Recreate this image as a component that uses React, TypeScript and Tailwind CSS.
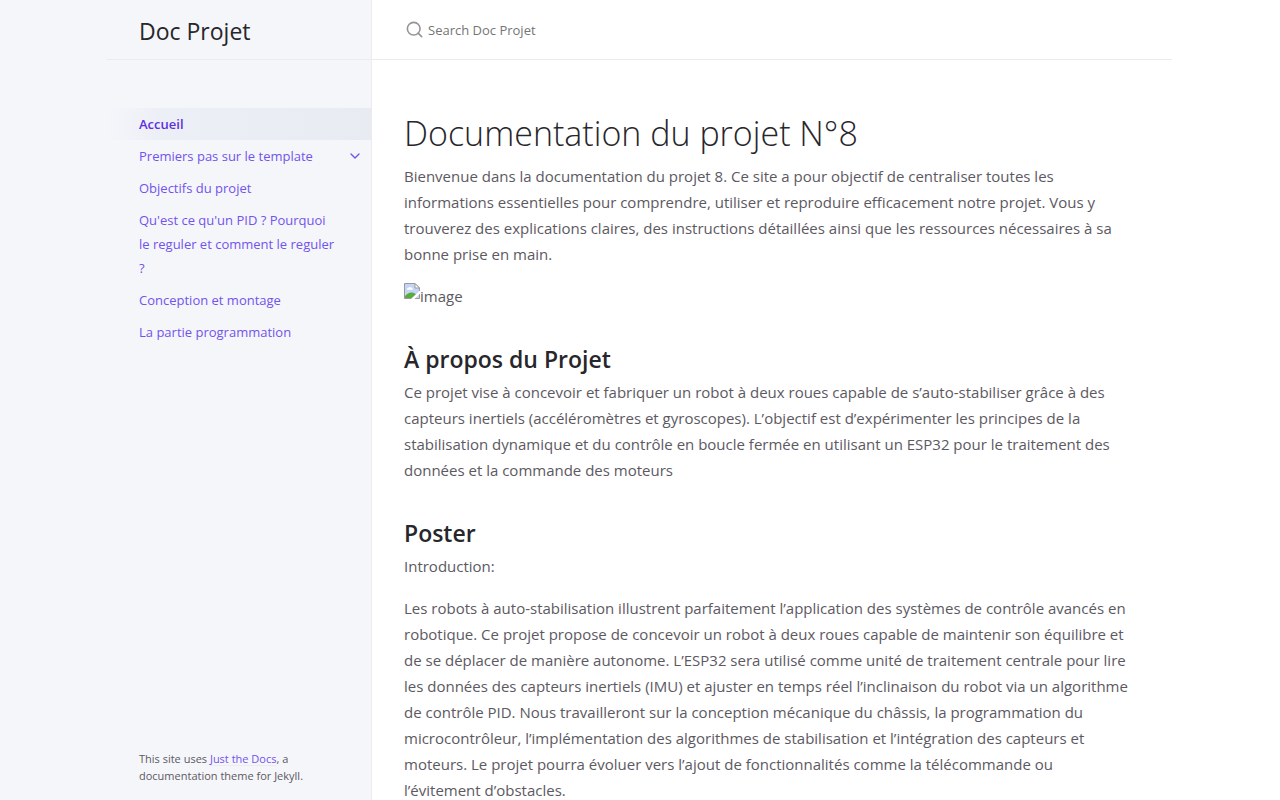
const navItems = [
  { label: 'Accueil', active: true },
  { label: 'Premiers pas sur le template', expandable: true },
  { label: 'Objectifs du projet' },
  { label: "Qu'est ce qu'un PID ? Pourquoi le reguler et comment le reguler ?" },
  { label: 'Conception et montage' },
  { label: 'La partie programmation' },
]

function Sidebar() {
  return (
    <aside className="sticky top-0 flex h-screen w-[calc(50%-268px)] min-w-[264px] shrink-0 flex-col items-end border-r border-[#eeebee] bg-[#f5f6fa]">
      <div className="flex h-[60px] w-full max-w-[264px] shrink-0 items-center border-b border-[#eeebee] px-8">
        <a href="#" className="pt-0.5 text-[23px] leading-8 text-[#27262b]">
          Doc Projet
        </a>
      </div>
      <nav aria-label="Main" className="w-full max-w-[264px] flex-1 overflow-y-auto pt-12">
        <ul>
          {navItems.map((item) => (
            <li key={item.label} className="flex">
              <a
                href="#"
                className={
                  item.active
                    ? 'flex-1 bg-linear-to-r from-[#ebedf5]/0 via-[#ebedf5]/80 via-20% to-[#e9ebf3] px-8 py-1 text-[13px] leading-6 font-semibold text-[#5c2fe0]'
                    : 'flex-1 px-8 py-1 text-[13px] leading-6 text-[#7253ed]'
                }
              >
                {item.label}
              </a>
              {item.expandable && (
                <button
                  type="button"
                  aria-label="Toggle Premiers pas sur le template"
                  className="-ml-8 flex w-8 items-center justify-center text-[#7253ed]"
                >
                  <svg
                    viewBox="0 0 24 24"
                    className="size-4 rotate-90"
                    fill="none"
                    stroke="currentColor"
                    strokeWidth="2"
                    strokeLinecap="round"
                    strokeLinejoin="round"
                  >
                    <path d="M9 18l6-6-6-6" />
                  </svg>
                </button>
              )}
            </li>
          ))}
        </ul>
      </nav>
      <footer className="w-full max-w-[264px] px-8 py-4 text-[11px] leading-[17px] text-[#5c5962]">
        This site uses{' '}
        <a href="#" className="text-[#7253ed] underline decoration-[#eeebee] underline-offset-2">
          Just the Docs
        </a>
        , a documentation theme for Jekyll.
      </footer>
    </aside>
  )
}

function SearchBar() {
  return (
    <div className="flex h-[60px] items-center border-b border-[#eeebee] pl-8">
      <label htmlFor="search" className="flex w-5 justify-center text-[#959396]">
        <svg
          viewBox="0 0 24 24"
          className="size-[19px]"
          fill="none"
          stroke="currentColor"
          strokeWidth="2"
          strokeLinecap="round"
          strokeLinejoin="round"
        >
          <circle cx="11" cy="11" r="8" />
          <path d="M21 21l-4.35-4.35" />
        </svg>
      </label>
      <input
        id="search"
        type="text"
        placeholder="Search Doc Projet"
        aria-label="Search Doc Projet"
        className="h-full flex-1 px-1 text-[13px] text-[#5c5962] outline-none placeholder:text-[#757575]"
      />
    </div>
  )
}

function MissingImage() {
  return (
    <span role="img" aria-label="image" className="flex items-start">
      <svg viewBox="0 0 16 16" className="size-4">
        <path d="M0.5 0.5H11L15.5 5V15.5H0.5Z" fill="#c3d5f8" stroke="#9a9a9a" />
        <path d="M11 0.5V5H15.5Z" fill="#fff" stroke="#9a9a9a" />
        <path d="M3 6.5a1.5 1.5 0 0 1 1.5-1.7A2 2 0 0 1 8 5.2a1 1 0 0 1 .5 1.6H3Z" fill="#fff" />
        <path d="M1 15v-2c2-2 4-3.500 6.500-3.500 2 0 3 .5 4.500 2l-4 3.500Z" fill="#5aac3c" />
        <path d="M7 16L16 7.500v3L10.500 16Z" fill="#fff" />
      </svg>
      <span>image</span>
    </span>
  )
}

export default function App() {
  return (
    <div className="flex items-start bg-white font-['Open_Sans','Noto_Sans',sans-serif]">
      <Sidebar />
      <div className="max-w-[800px] min-w-0 flex-1">
        <SearchBar />
        <main className="pt-12 pr-10 pl-8 text-[15px] leading-[26px] text-[#5c5962]">
          <h1 className="pt-1 text-[34px] leading-[43px] font-light text-[#27262b]">
            Documentation du projet N°8
          </h1>
          <p className="mt-2">
            Bienvenue dans la documentation du projet 8. Ce site a pour objectif de centraliser toutes les
            informations essentielles pour comprendre, utiliser et reproduire efficacement notre projet. Vous y
            trouverez des explications claires, des instructions détaillées ainsi que les ressources nécessaires à sa
            bonne prise en main.
          </p>
          <p className="mt-4">
            <MissingImage />
          </p>
          <h2 className="mt-[34px] text-[23px] leading-8 font-semibold text-[#27262b]">À propos du Projet</h2>
          <p className="mt-1">
            Ce projet vise à concevoir et fabriquer un robot à deux roues capable de s’auto-stabiliser grâce à des
            capteurs inertiels (accéléromètres et gyroscopes). L’objectif est d’expérimenter les principes de la
            stabilisation dynamique et du contrôle en boucle fermée en utilisant un ESP32 pour le traitement des
            données et la commande des moteurs
          </p>
          <h2 className="mt-[34px] text-[23px] leading-8 font-semibold text-[#27262b]">Poster</h2>
          <p className="mt-1">Introduction:</p>
          <p className="mt-4">
            Les robots à auto-stabilisation illustrent parfaitement l’application des systèmes de contrôle avancés en
            robotique. Ce projet propose de concevoir un robot à deux roues capable de maintenir son équilibre et
            de se déplacer de manière autonome. L’ESP32 sera utilisé comme unité de traitement centrale pour lire
            les données des capteurs inertiels (IMU) et ajuster en temps réel l’inclinaison du robot via un algorithme
            de contrôle PID. Nous travailleront sur la conception mécanique du châssis, la programmation du
            microcontrôleur, l’implémentation des algorithmes de stabilisation et l’intégration des capteurs et
            moteurs. Le projet pourra évoluer vers l’ajout de fonctionnalités comme la télécommande ou
            l’évitement d’obstacles.
          </p>
        </main>
      </div>
    </div>
  )
}
